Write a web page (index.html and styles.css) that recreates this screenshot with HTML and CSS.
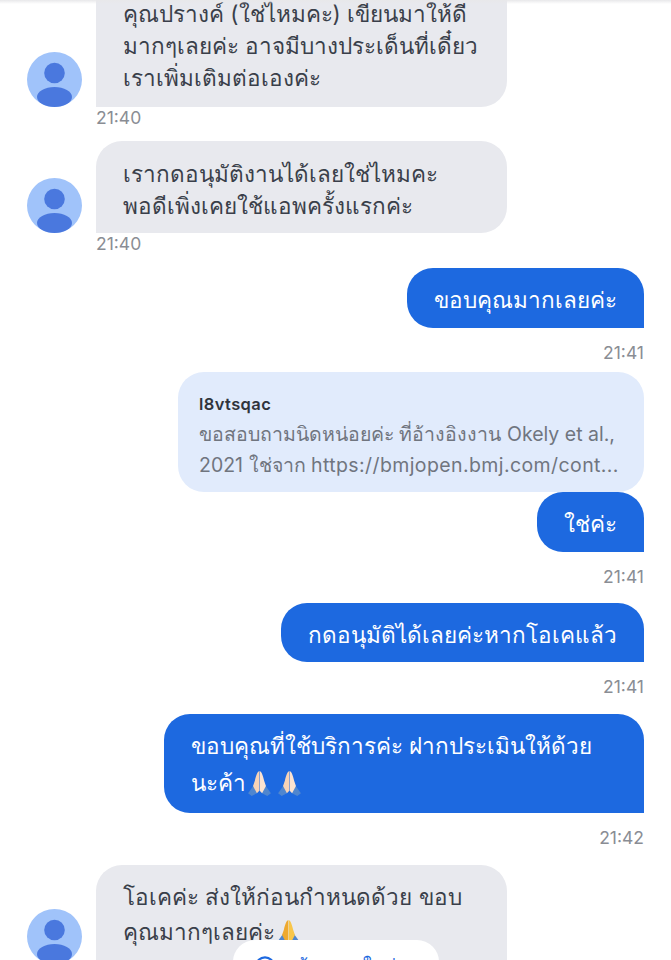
FILE: index.html
```html
<!DOCTYPE html>
<html lang="th">
<head>
  <meta charset="UTF-8" />
  <meta name="viewport" content="width=device-width, initial-scale=1.0"/>
  <title>Chat</title>
  <link rel="stylesheet" href="styles.css">
</head>
<body>
  <svg class="defs" width="0" height="0">
    <symbol id="avatar" viewBox="0 0 55 55">
      <circle cx="27.5" cy="27.5" r="27.5" fill="#a0c3fa"/>
      <circle cx="27.5" cy="21" r="10.3" fill="#4a78de"/>
      <ellipse cx="27.5" cy="45" rx="17.5" ry="10" fill="#4a78de"/>
    </symbol>
    <symbol id="pray" viewBox="0 0 26 26">
      <path d="M8 14 2 22.5 5.5 25 10.5 22.5 11 18z" fill="#4f86cf"/>
      <path d="M18 14 24 22.5 20.5 25 15.5 22.5 15 18z" fill="#4f86cf"/>
      <path d="M12.8 1C11 1.5 9.5 6 8.6 10L6.8 15.5 10.5 22.5 12.8 20z" fill="#f7d3b6"/>
      <path d="M13.2 1C15 1.5 16.5 6 17.4 10L19.2 15.5 15.5 22.5 13.2 20z" fill="#fce3d0"/>
    </symbol>
    <symbol id="pray-gold" viewBox="0 0 26 26">
      <path d="M8 14 2 22.5 5.5 25 10.5 22.5 11 18z" fill="#4f86cf"/>
      <path d="M18 14 24 22.5 20.5 25 15.5 22.5 15 18z" fill="#4f86cf"/>
      <path d="M12.8 1C11 1.5 9.5 6 8.6 10L6.8 15.5 10.5 22.5 12.8 20z" fill="#eea92f"/>
      <path d="M13.2 1C15 1.5 16.5 6 17.4 10L19.2 15.5 15.5 22.5 13.2 20z" fill="#f8c64a"/>
    </symbol>
  </svg>

  <main class="chat">
    <div class="row first">
      <svg class="avatar"><use href="#avatar"/></svg>
      <div class="bubble in">คุณปรางค์ (ใช่ไหมคะ) เขียนมาให้ดี<br>มากๆเลยค่ะ อาจมีบางประเด็นที่เดี๋ยว<br>เราเพิ่มเติมต่อเองค่ะ</div>
    </div>
    <div class="time t-in">21:40</div>

    <div class="row second">
      <svg class="avatar"><use href="#avatar"/></svg>
      <div class="bubble in">เรากดอนุมัติงานได้เลยใช่ไหมคะ<br>พอดีเพิ่งเคยใช้แอพครั้งแรกค่ะ</div>
    </div>
    <div class="time t-in">21:40</div>

    <div class="bubble out gap-a">ขอบคุณมากเลยค่ะ</div>
    <div class="time t-out">21:41</div>

    <div class="quote">
      <div class="quote-name">l8vtsqac</div>
      <div class="quote-text">ขอสอบถามนิดหน่อยค่ะ ที่อ้างอิงงาน Okely et al.,<br>2021 ใช่จาก <span class="latin">https://bmjopen.bmj.com/cont...</span></div>
    </div>
    <div class="bubble out joined">ใช่ค่ะ</div>
    <div class="time t-out">21:41</div>

    <div class="bubble out short">กดอนุมัติได้เลยค่ะหากโอเคแล้ว</div>
    <div class="time t-out">21:41</div>

    <div class="bubble out wide">ขอบคุณที่ใช้บริการค่ะ ฝากประเมินให้ด้วย<span class="tall-line">นะค้า<svg class="emoji"><use href="#pray"/></svg><svg class="emoji second-emoji"><use href="#pray"/></svg></span></div>
    <div class="time t-out">21:42</div>

    <div class="row last">
      <svg class="avatar"><use href="#avatar"/></svg>
      <div class="bubble in">โอเคค่ะ ส่งให้ก่อนกำหนดด้วย ขอบ<span class="tall-line">คุณมากๆเลยค่ะ<svg class="emoji"><use href="#pray-gold"/></svg></span></div>
    </div>
  </main>

  <div class="top-shade"></div>
  <div class="pill">
    <svg class="pill-icon" viewBox="0 0 24 24"><circle cx="12" cy="12" r="9.5" fill="none" stroke="#1d69e0" stroke-width="2.4"/></svg>
    <span class="pill-text">ดูข้อความใหม่</span>
  </div>
</body>
</html>
```

FILE: styles.css
```css
html, body {
  margin: 0;
  height: 960px;
  overflow: hidden;
  background: #fff;
}
body {
  position: relative;
  font-family: "Inter", "Noto Sans", "Noto Sans CJK SC", sans-serif;
}
.defs {
  position: absolute;
}
.chat {
  display: flex;
  flex-direction: column;
  padding: 0 27px;
  margin-top: -15px;
}
.row {
  display: flex;
  align-items: flex-end;
  gap: 14px;
}
.row.first .bubble {
  height: 122px;
  padding-top: 13px;
  border-radius: 0 0 26px 0;
}
.row.second {
  margin-top: 12px;
}
.row.second .bubble {
  padding-top: 17px;
  padding-bottom: 11px;
}
.row.last {
  margin-top: 16px;
  height: 96px;
  align-items: flex-start;
}
.row.last .avatar {
  margin-top: 44px;
}
.row.last .bubble {
  height: 120px;
  padding-top: 16px;
  flex: none;
}
.avatar {
  width: 55px;
  height: 55px;
  flex: none;
}
.bubble {
  box-sizing: border-box;
  font-size: 22.5px;
  line-height: 32px;
  border-radius: 26px;
}
.in {
  width: 411px;
  background: #e8e9ee;
  color: #3a3f4a;
  padding: 14px 27px;
  border-bottom-left-radius: 0;
}
.out {
  align-self: flex-end;
  background: #1d69e0;
  color: #fff;
  padding: 16px 27px 12px;
  border-bottom-right-radius: 0;
}
.short {
  margin-top: 15px;
  padding-bottom: 11px;
}
.wide {
  width: 480px;
  height: 99px;
  margin-top: 16px;
  padding-top: 16px;
}
.wide .tall-line {
  margin-top: 5px;
}
.tall-line {
  display: block;
  margin-top: 3px;
}
.gap-a {
  margin-top: 13px;
}
.time {
  font-size: 17.5px;
  line-height: 22px;
  color: #8a8d94;
}
.t-in {
  margin-left: 69px;
}
.t-out {
  align-self: flex-end;
  margin-top: 14px;
}
.quote {
  align-self: flex-end;
  box-sizing: border-box;
  width: 466px;
  height: 120px;
  margin-top: 8px;
  padding: 21px 21px;
  background: #e1ebfc;
  border-radius: 26px;
}
.quote-name {
  font-size: 16.5px;
  font-weight: 600;
  line-height: 22px;
  letter-spacing: .4px;
  color: #30343c;
  margin-bottom: 4px;
}
.quote-text {
  font-size: 19.5px;
  line-height: 31px;
  color: #70757f;
  white-space: nowrap;
}
.latin {
  letter-spacing: .4px;
}
.joined {
  border-top-right-radius: 26px;
}
.emoji {
  width: 27px;
  height: 27px;
  vertical-align: -6px;
}
.second-emoji {
  margin-left: 3px;
}
.top-shade {
  position: absolute;
  top: 0;
  left: 0;
  right: 0;
  height: 4px;
  background: linear-gradient(#e8e8ea, rgba(255,255,255,0));
}
.pill {
  position: absolute;
  left: 233px;
  top: 940px;
  width: 206px;
  height: 44px;
  display: flex;
  align-items: flex-start;
  gap: 8px;
  padding: 15px 21px;
  box-sizing: border-box;
  background: #fff;
  border-radius: 22px;
}
.pill-icon {
  width: 22px;
  height: 22px;
  flex: none;
}
.pill-text {
  font-size: 18px;
  line-height: 22px;
  color: #1d69e0;
  white-space: nowrap;
}
```
